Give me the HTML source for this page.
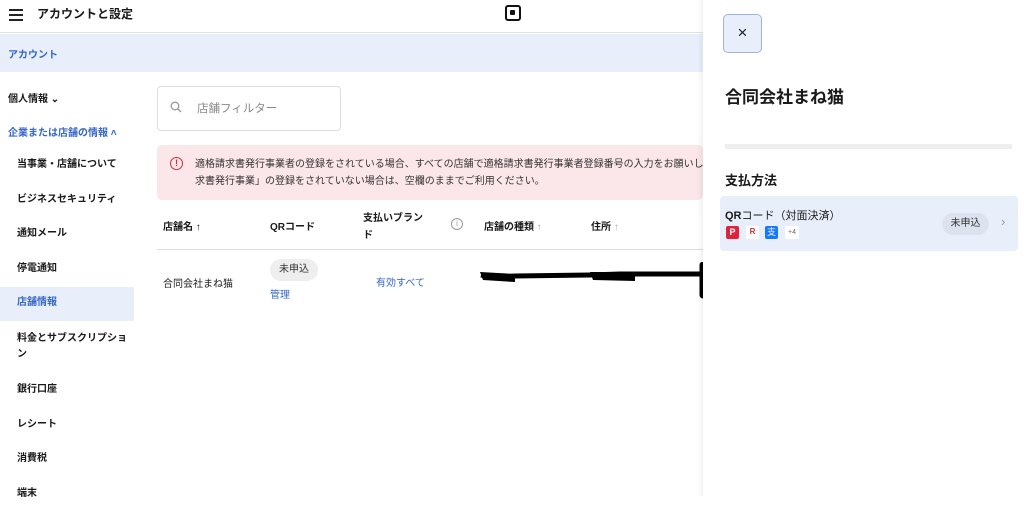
<!DOCTYPE html>
<html><head><meta charset="utf-8"><style>
*{margin:0;padding:0;box-sizing:border-box}
body{width:1024px;height:496px;overflow:hidden;position:relative;background:#fff;font-family:"Liberation Sans","Noto Sans CJK JP",sans-serif;color:#1a1a1a;font-size:11px}
.a{position:absolute;white-space:nowrap}
.b{font-weight:bold}
.blue{color:#3566c8}
</style></head><body>
<div class="a" style="left:0;top:0;width:703px;height:33px;border-bottom:1px solid #e3e3e3"></div>
<div class="a" style="left:9px;top:9px;width:14px;height:2px;background:#222;box-shadow:0 5px 0 #222,0 10px 0 #222"></div>
<div class="a b" style="left:37px;top:5px;font-size:12px">アカウントと設定</div>
<div class="a" style="left:505px;top:5px;width:16px;height:16px;border:2.5px solid #111;border-radius:3px"><div style="position:absolute;left:3px;top:3px;width:5px;height:5px;background:#111;border-radius:1px"></div></div>
<div class="a" style="left:0;top:34px;width:703px;height:38px;background:#e8effb"></div>
<div class="a b blue" style="left:8px;top:46px;font-size:10px">アカウント</div>
<div class="a b" style="left:8px;top:90px;font-size:10px">個人情報 ⌄</div>
<div class="a b blue" style="left:8px;top:124px;font-size:10px">企業または店舗の情報 ˄</div>
<div class="a" style="left:0;top:287px;width:134px;height:34px;background:#e8effb"></div>
<div class="a b" style="left:17px;top:148px;font-size:10px;line-height:34.5px">当事業・店舗について<br>ビジネスセキュリティ<br>通知メール<br>停電通知<br><span class="blue">店舗情報</span></div>
<div class="a b" style="left:17px;top:331px;font-size:10px;line-height:16px">料金とサブスクリプショ<br>ン</div>
<div class="a b" style="left:17px;top:373px;font-size:10px;line-height:34.5px">銀行口座<br>レシート<br>消費税<br>端末</div>
<div class="a" style="left:157px;top:86px;width:184px;height:45px;border:1px solid #ddd;border-radius:4px"></div>
<svg class="a" style="left:170px;top:101px" width="12" height="12" viewBox="0 0 12 12"><circle cx="5" cy="5" r="3.8" fill="none" stroke="#999" stroke-width="1.3"/><path d="M8 8l3 3" stroke="#999" stroke-width="1.3"/></svg>
<div class="a" style="left:197px;top:100px;font-size:11.5px;color:#888">店舗フィルター</div>
<div class="a" style="left:157px;top:145px;width:546px;height:55px;background:#fbe6e9;border-radius:5px;overflow:hidden">
<div class="a" style="left:13px;top:12px;width:13px;height:13px;border:1.5px solid #c6313a;border-radius:50%;color:#c6313a;font-size:9px;text-align:center;line-height:10px;font-weight:bold">!</div>
<div class="a" style="left:38px;top:11px;font-size:10px;line-height:17px;color:#333">適格請求書発行事業者の登録をされている場合、すべての店舗で適格請求書発行事業者登録番号の入力をお願いし<br>求書発行事業」の登録をされていない場合は、空欄のままでご利用ください。</div></div>
<div class="a b" style="left:163px;top:218px;font-size:10px">店舗名 ↑</div>
<div class="a b" style="left:270px;top:218px;font-size:10px">QRコード</div>
<div class="a b" style="left:363px;top:210px;font-size:10px;line-height:17px">支払いブラン<br>ド</div>
<div class="a" style="left:451px;top:218px;width:12px;height:12px;border:1px solid #999;border-radius:50%;color:#999;font-size:8px;text-align:center;line-height:10px">i</div>
<div class="a b" style="left:484px;top:218px;font-size:10px">店舗の種類 <span style="color:#aaa">↑</span></div>
<div class="a b" style="left:591px;top:218px;font-size:10px">住所 <span style="color:#aaa">↑</span></div>
<div class="a" style="left:157px;top:249px;width:546px;height:1px;background:#ddd"></div>
<div class="a" style="left:163px;top:275px;font-size:10px">合同会社まね猫</div>
<div class="a" style="left:270px;top:259px;width:48px;height:22px;background:#eee;border-radius:11px;font-size:10px;text-align:center;line-height:22px;color:#333">未申込</div>
<div class="a blue" style="left:270px;top:286px;font-size:10px">管理</div>
<div class="a blue" style="left:376px;top:274px;font-size:10px">有効すべて</div>
<svg class="a" style="left:475px;top:262px" width="235" height="38"><path d="M6 13 Q20 16 40 14 L115 13 L145 12 L230 12" stroke="#000" stroke-width="5" fill="none"/><path d="M5 10 L40 12 L40 20 L8 18Z" fill="#000"/><path d="M115 10 L160 10 L160 19 L118 18Z" fill="#000"/><path d="M228 3 L228 33" stroke="#000" stroke-width="7" stroke-linecap="round"/></svg>
<div class="a" style="left:697px;top:0;width:8px;height:496px;background:linear-gradient(90deg,rgba(0,0,0,0),rgba(0,0,0,.07))"></div>
<div class="a" style="left:703px;top:0;width:321px;height:496px;background:#fff"></div>
<div class="a" style="left:723px;top:14px;width:39px;height:39px;background:#e8effb;border:1px solid #9fb3dc;border-radius:5px;text-align:center;line-height:36px;font-size:17px">×</div>
<div class="a b" style="left:725px;top:83px;font-size:17px">合同会社まね猫</div>
<div class="a" style="left:725px;top:144px;width:287px;height:5px;background:#eee"></div>
<div class="a b" style="left:725px;top:170px;font-size:13px">支払方法</div>
<div class="a" style="left:720px;top:196px;width:298px;height:55px;background:#e8effb;border-radius:4px"></div>
<div class="a" style="left:725px;top:207px;font-size:11px"><b>QR</b>コード（対面決済）</div>
<div class="a" style="left:726px;top:226px;width:13px;height:13px;background:#e0223a;border-radius:2px;color:#fff;font-size:9px;text-align:center;line-height:13px;font-weight:bold">P</div>
<div class="a" style="left:746px;top:226px;width:13px;height:13px;background:#fff;color:#c33;font-size:8px;text-align:center;line-height:12px;font-weight:bold">R</div>
<div class="a" style="left:765px;top:226px;width:13px;height:13px;background:#1677ff;border-radius:2px;color:#fff;font-size:9px;text-align:center;line-height:13px">支</div>
<div class="a" style="left:785px;top:226px;width:14px;height:13px;background:#fff;color:#666;font-size:7px;text-align:center;line-height:13px">+4</div>
<div class="a" style="left:942px;top:213px;width:47px;height:22px;background:#dde3ee;border-radius:11px;font-size:10px;text-align:center;line-height:22px;color:#333">未申込</div>
<div class="a" style="left:1001px;top:214px;font-size:13px;color:#999">›</div>
</body></html>
